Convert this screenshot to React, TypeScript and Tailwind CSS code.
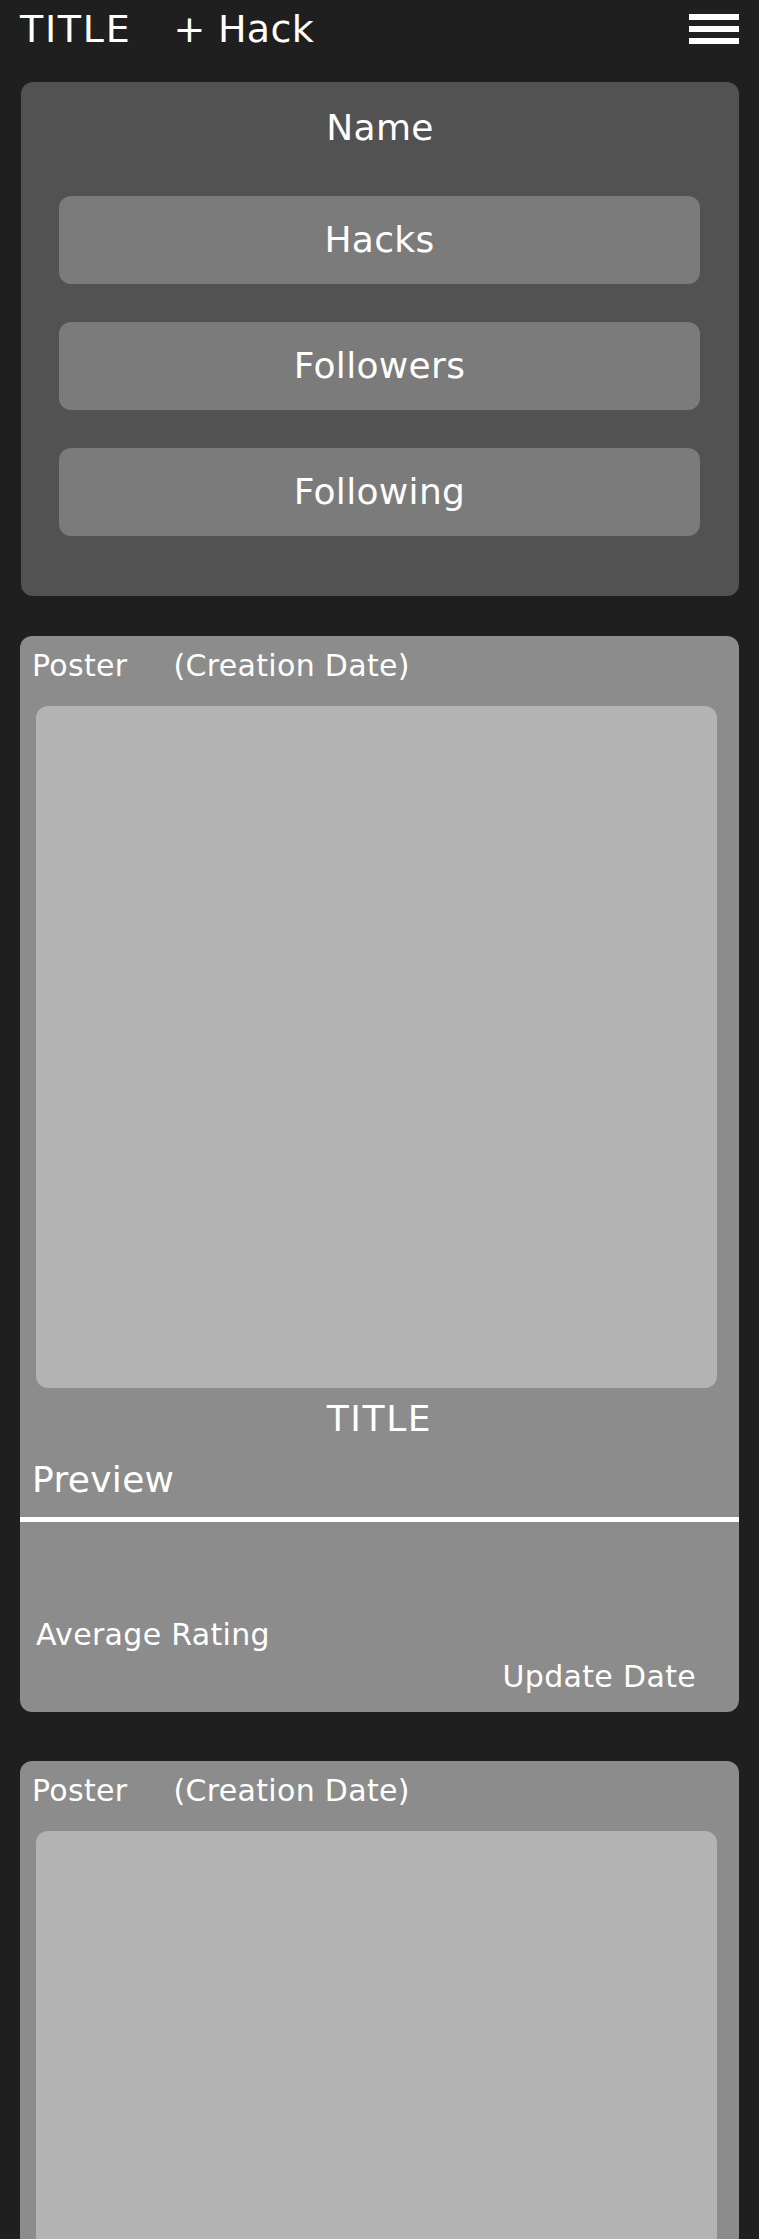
const font = { fontFamily: '"DejaVu Sans", Verdana, sans-serif' };

function HackCard() {
  return (
    <div className="mx-[20px] flex flex-col rounded-[12px] bg-[#8c8c8c] pt-[12px] pb-[18px] text-white">
      <div className="flex gap-[46px] pl-[12px] text-[30px] leading-[35px]">
        <span>Poster</span>
        <span>(Creation Date)</span>
      </div>
      <div className="mt-[23px] ml-[16px] h-[682px] w-[681px] rounded-[12px] bg-[#b3b3b3]" />
      <div className="mt-[10px] text-center text-[36px] leading-[42px] tracking-[0.045em]">TITLE</div>
      <div className="mt-[19px] pl-[12px] text-[36px] leading-[42px]">Preview</div>
      <div className="mt-[16px] h-[5px] bg-white" />
      <div className="mt-[95px] pl-[16px] text-[30px] leading-[35px]">Average Rating</div>
      <div className="mt-[7px] pr-[43px] text-right text-[30px] leading-[35px]">Update Date</div>
    </div>
  );
}

export default function App() {
  return (
    <div className="min-h-screen bg-[#1f1f1f] pb-[60px] tracking-[0.02em] text-white" style={font}>
      {/* Header */}
      <div className="flex h-[82px] items-start justify-between px-[20px]">
        <div className="flex gap-[42px] pt-[7px] text-[38px] leading-[44px]">
          <span className="tracking-[0.045em]">TITLE</span>
          <span>+ Hack</span>
        </div>
        <div className="mt-[14px] flex w-[50px] flex-col gap-[6px]">
          <div className="h-[6px] bg-white" />
          <div className="h-[6px] bg-white" />
          <div className="h-[6px] bg-white" />
        </div>
      </div>

      {/* Profile */}
      <div className="ml-[21px] mr-[20px] flex flex-col rounded-[12px] bg-[#525252] pt-[25px] pb-[60px]">
        <div className="text-center text-[36px] leading-[42px]">Name</div>
        <div className="mt-[47px] flex flex-col gap-[38px] pl-[38px] pr-[39px]">
          {['Hacks', 'Followers', 'Following'].map((label) => (
            <div
              key={label}
              className="flex h-[88px] items-center justify-center rounded-[12px] bg-[#7b7b7b] text-[36px] leading-[42px]"
            >
              {label}
            </div>
          ))}
        </div>
      </div>

      {/* Feed */}
      <div className="mt-[40px] flex flex-col gap-[49px]">
        <HackCard />
        <HackCard />
      </div>
    </div>
  );
}
